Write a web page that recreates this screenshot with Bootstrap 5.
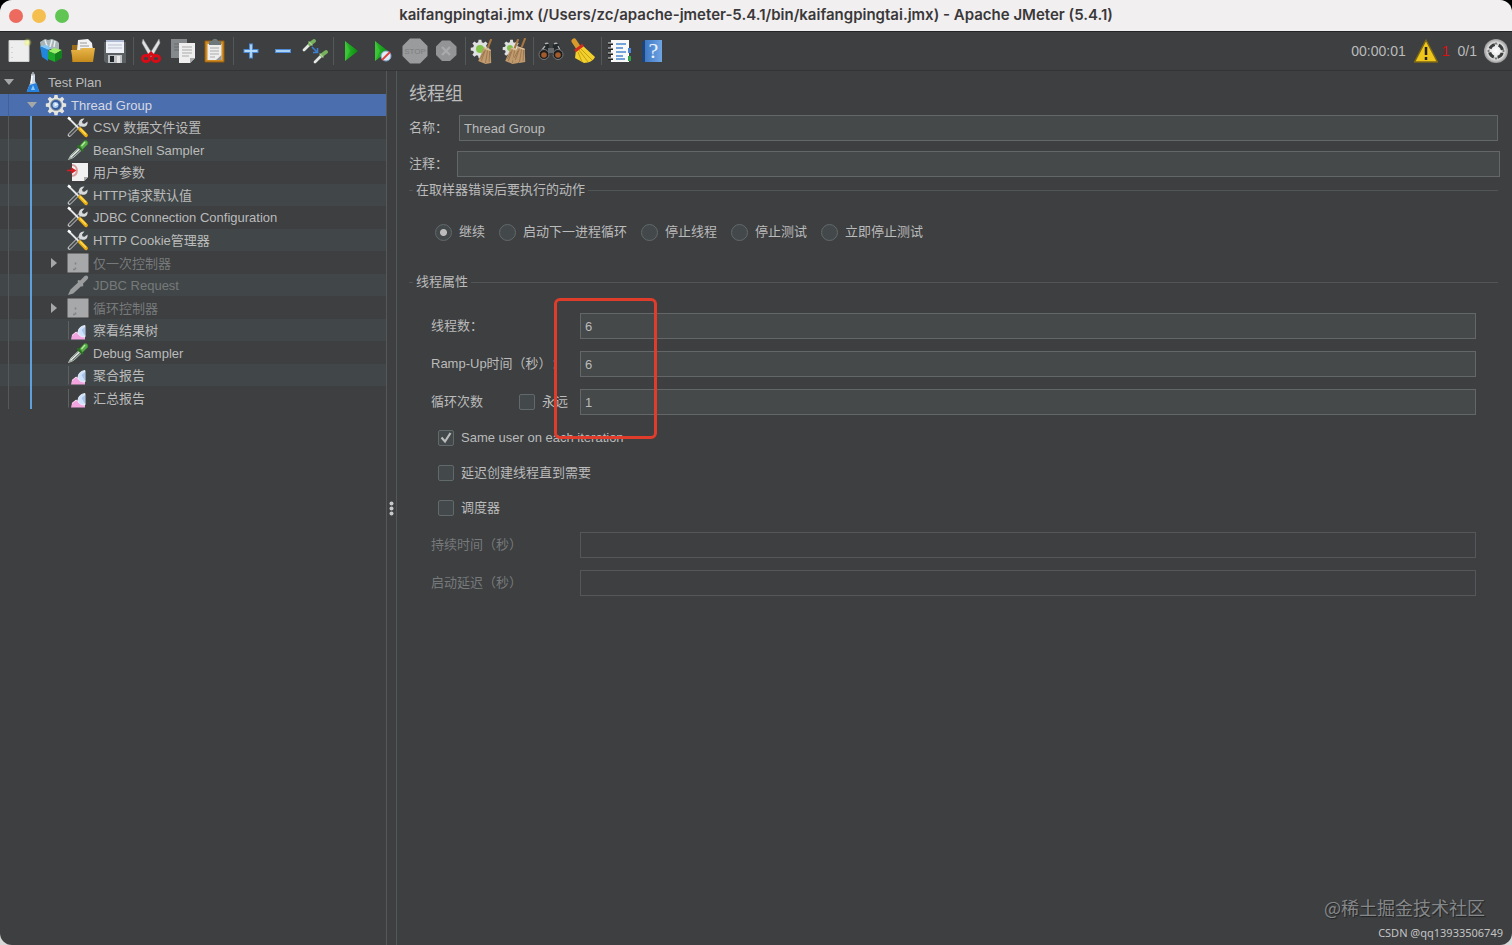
<!DOCTYPE html>
<html lang="zh-CN">
<head>
<meta charset="utf-8">
<meta name="viewport" content="width=device-width, initial-scale=1">
<title>Apache JMeter (5.4.1)</title>
<link href="https://cdn.jsdelivr.net/npm/bootstrap@5.3.0/dist/css/bootstrap.min.css" rel="stylesheet">
<style>
  :root { --pane:#3d3f41; --line:#555859; --edge:#646768; --field:#45494a; --ink:#bbb; --dim:#777a7b; }
  body { font-family:"Liberation Sans","Noto Sans CJK SC",sans-serif; font-size:13px; line-height:20px; color:var(--ink);
         background:linear-gradient(#000 50%,#d8d8d8 50%); text-spacing-trim:space-all; }
  .app-window { background:var(--pane); border-radius:12px; overflow:hidden; }
  .title-bar { height:32px; background:#f1eff0; border-bottom:1px solid #232425; color:#3a3839; }
  .title-bar h1 { font:600 15px/30px Inter,sans-serif; }
  .lights { left:9px; top:9px; gap:9px; }
  .light { width:14px; height:14px; border-radius:50%; border:0; padding:0; }
  .light-close { background:#ed6a5f; } .light-min { background:#f5bf4f; } .light-max { background:#61c554; }
  .tool-bar { height:39px; padding:0 3px; border-bottom:1px solid #323435; }
  .tool { width:32px; height:32px; padding:0; border:0; background:none; display:flex; align-items:center; justify-content:center; }
  .tool svg { width:26px; height:26px; }
  .tool-sep { width:4px; height:28px; background:linear-gradient(90deg,transparent 2px,#55585a 2px,#55585a 3px,transparent 3px); }
  .status { font-size:14px; }
  .errors { color:#e01010; }
  .tree-pane { width:386px; }
  .tree { display:grid; grid-auto-rows:1fr; height:338px; }
  .tree li { display:flex; align-items:center; white-space:nowrap; }
  .tree li:nth-child(even) { background:#414748; }
  .tree li.picked { background:#4b6eaf; color:#d5d9e2; }
  .tree li.off { color:var(--dim); }
  .tree li > span:last-child { padding-top:2px; }
  .guide-a { width:23px; align-self:stretch; background:linear-gradient(90deg,transparent 8px,#55595a 8px,#55595a 9px,transparent 9px); }
  .guide-b { width:22px; align-self:stretch; background:linear-gradient(90deg,transparent 7px,#5f9fdc 7px,#5f9fdc 9px,transparent 9px); }
  .picked .guide-a { background:linear-gradient(90deg,transparent 8px,#435f96 8px,#435f96 9px,transparent 9px); }
  .twist { width:18px; margin-right:4px; display:flex; justify-content:center; }
  .twist svg { width:10px; height:10px; fill:#a5a7a8; }
  .node-icon { width:22px; height:22px; margin-right:4px; }
  .splitter { width:11px; border:solid var(--line); border-width:0 1px; }
  .splitter svg { width:5px; height:15px; fill:#c8c8c8; }
  .editor { padding:11px 14px 11px 12px; }
  .editor h2 { font-size:18px; line-height:24px; font-weight:400; margin:0 0 9px; }
  .box { height:26px; border:1px solid var(--edge); border-radius:0; background:var(--field); color:var(--ink); padding:0 4px; width:100%; min-width:0; font-size:13px; line-height:20px; }
  .box:disabled { background:var(--pane); border-color:#55585a; }
  .name-label { width:50px; flex:none; }
  .comment-row { margin:10px -2px 3px 0; }
  .comment-row .name-label { width:48px; }
  .group-title { font-size:13px; line-height:20px; font-weight:400; gap:3px; margin:0; }
  .group-title::before { content:""; width:4px; border-top:1px solid #515556; }
  .group-title::after { content:""; flex:1; border-top:1px solid #515556; }
  .radio-row { padding:22px 26px 0; gap:14px; margin-bottom:30px; }
  .form-check-input.pick { width:17px; height:17px; margin:0; float:none; flex:none; background-color:#43494a; border:1px solid #62696a; box-shadow:none; }
  .form-check-input.pick[type=checkbox] { width:16px; height:16px; border-radius:2px; }
  .pick:checked[type=radio] { background-image:radial-gradient(circle,#bcbcbc 3px,transparent 4px); }
  .pick:checked[type=checkbox] { background-size:16px 16px; background-image:url("data:image/svg+xml,%3Csvg xmlns='http://www.w3.org/2000/svg' viewBox='0 0 16 16'%3E%3Cpath d='M3.5 7.5 7 11.5 12.5 3' fill='none' stroke='%23bbb' stroke-width='2.2'/%3E%3C/svg%3E"); }
  .choice { display:flex; align-items:center; gap:7px; }
  .props { padding:21px 22px 0; }
  .fields { display:grid; grid-template-columns:149px 1fr; row-gap:12px; align-items:center; }
  .checks { padding:13px 7px 14px; display:grid; row-gap:15px; }
  .off-label { color:var(--dim); }
  .highlight { left:123px; top:-15px; width:103px; height:141px; border:3px solid #e03c2b; border-radius:6px; pointer-events:none; }
  .credit { right:9px; bottom:3px; }
  .credit-main { font:18px/26px "Noto Sans CJK SC",sans-serif; color:#85888a; text-shadow:1px 1px 1px #222; margin:0 18px 4px 0; }
  .credit-sub { font:11px/18px "Noto Sans",sans-serif; color:#c4c4c4; margin:0; }
</style>
<script src="https://cdn.jsdelivr.net/npm/bootstrap@5.3.0/dist/js/bootstrap.bundle.min.js"></script>
</head>
<body>
<svg class="position-absolute" width="0" height="0" aria-hidden="true">
  <defs>
    <linearGradient id="g-green" x1="0" x2="1"><stop stop-color="#2fbf2c"/><stop offset="1" stop-color="#0b8a12"/></linearGradient>
    <linearGradient id="g-gold" x1="0" x2="0" y1="0" y2="1"><stop stop-color="#e9b64a"/><stop offset="1" stop-color="#c58a1c"/></linearGradient>
    <linearGradient id="g-book" x1="0" x2="1"><stop stop-color="#3f78c4"/><stop offset="1" stop-color="#6fa5e4"/></linearGradient>
    <radialGradient id="g-ball"><stop stop-color="#fff"/><stop offset=".7" stop-color="#ddd"/><stop offset="1" stop-color="#999"/></radialGradient>
    <radialGradient id="g-glow"><stop stop-color="#fbfcb0"/><stop offset="1" stop-color="#dfe84a" stop-opacity="0"/></radialGradient>
  </defs>
  <symbol id="gearshape" viewBox="0 0 24 24">
    <path d="M10.300 1h3.400l.5 3 2 .8 2.500-1.800 2.400 2.400-1.800 2.500.8 2 3 .5v3.400l-3 .5-.8 2 1.800 2.500-2.400 2.400-2.500-1.800-2 .8-.5 3h-3.400l-.5-3-2-.8-2.500 1.800-2.400-2.400 1.800-2.500-.8-2-3-.5v-3.400l3-.5.8-2-1.800-2.500 2.400-2.400 2.500 1.800 2-.8z"/>
  </symbol>
  <symbol id="broomtan" viewBox="0 0 14 24">
    <path d="M12.500 0 9 9" stroke="#a8763f" stroke-width="2"/>
    <path d="M5.500 8 12 10.500 12.500 23 7 24 0 21z" fill="#c09a6c"/>
    <path d="m7 10-4 11M9 11 7 23m4-12-.5 11M5.700 12 2 19" stroke="#8e6c48" stroke-width=".7" fill="none"/>
    <path d="m6 9 6 2" stroke="#dfc39a" stroke-width="1.200"/>
  </symbol>
  <symbol id="wrench" viewBox="0 0 22 22">
    <path d="m2.500 19 10-10" stroke="#c4c6c7" stroke-width="3.600" stroke-linecap="round"/>
    <path d="m2.800 18.700 10-10" stroke="#4a4d4e" stroke-width="2" stroke-linecap="round"/>
    <path d="M12 9.500c-1-4 1.500-7.500 5.500-7l-2.500 3 .6 2 2 .3 2.900-2.300c.7 4-2.500 6.200-6 5z" fill="#d7dadb"/>
    <path d="m1.500 2 10 10" stroke="#e4e6e7" stroke-width="1.800"/><path d="m1 1.500 2.500 2" stroke="#fff" stroke-width="2.500"/>
    <path d="m13 13 6 6.300" stroke="#e8ac12" stroke-width="3.800" stroke-linecap="round"/><path d="m13 12.500 6 6" stroke="#ffe05a" stroke-width="1.200"/>
  </symbol>
  <symbol id="dropper" viewBox="0 0 22 22">
    <path d="M1.500 20.500 4 16 12 8.500l2.500 2.500-8 7.500z" fill="#68736d" stroke="#b4bfb9"/>
    <path d="m3.500 18.500 9-8.500" stroke="#eef5f0" stroke-width="1.200"/>
    <path d="m11 7 4.500 4.500" stroke="#286f22" stroke-width="2.200" stroke-linecap="round"/>
    <path d="m12.500 7 4.500-5c2-1.500 5 .5 3.500 3.500l-5 5z" fill="#58ad48" stroke="#347d2c" stroke-width=".6"/>
    <path d="m14.500 7 3.500-4" stroke="#b5ec9f" stroke-width="1.400"/>
  </symbol>
  <symbol id="dropperoff" viewBox="0 0 22 22">
    <path d="M1 21 3.500 15.500 11 8.500l-.5-1.500 1-1 1.700.5 4.500-4.500c2-1.500 4.500.5 3 3l-4.700 4.700.4 1.800-1 1-1.600-.1-7.500 7z" fill="#9a9c9d"/>
  </symbol>
  <symbol id="chart" viewBox="0 0 22 22">
    <path d="M1.500 2v18.500" stroke="#5e6061" fill="none"/>
    <path d="M4 20.500 5 16l4-3 4 2 5 2v3.500z" fill="#f3a5df"/>
    <path d="M5 16.500 9 13l3 2 2-4 4 6" fill="none" stroke="#f9d9f2"/>
    <path d="M11 13c.5-4 3-6 7-6.500v11.500C15 18 11 17 11 13z" fill="#cfe2fb" stroke="#f2f7ff" stroke-width=".8"/><path d="M14.500 11 18 8v9z" fill="#a8c5ee"/>
  </symbol>
  <symbol id="ctrl" viewBox="0 0 22 22">
    <path d="M.5 1.500h21v19H.5z" fill="#a6a8a9"/>
    <path d="M8.500 10.500v2m0 3v2M6 17.500h2" stroke="#808283" stroke-width="1.500"/>
  </symbol>
</svg>

<div class="app-window d-flex flex-column min-vh-100 position-relative">
  <header class="title-bar position-relative text-center">
    <div class="lights position-absolute d-flex">
      <button class="light light-close" aria-label="关闭"></button>
      <button class="light light-min" aria-label="最小化"></button>
      <button class="light light-max" aria-label="缩放"></button>
    </div>
    <h1 class="m-0 text-truncate">kaifangpingtai.jmx (/Users/zc/apache-jmeter-5.4.1/bin/kaifangpingtai.jmx) - Apache JMeter (5.4.1)</h1>
  </header>

  <nav class="tool-bar d-flex align-items-center" aria-label="工具栏">
    <button class="tool" aria-label="新建"><svg viewBox="0 0 26 26"><path d="M3 2.500h20v21H3z" fill="#eee"/><path d="M3 2.500h20v21H3z" fill="none" stroke="#d0d0d0"/><path d="M6 9v1m0 4v1m0 4v1" stroke="#bbb"/><circle cx="21.500" cy="4.500" r="4.500" fill="url(#g-glow)"/></svg></button>
    <button class="tool" aria-label="模板"><svg viewBox="0 0 26 26"><path d="m2 4 5-3 3 1 4-1 5 2 2 2v6H3z" fill="#a9b4b8"/><path d="m7 2 2 6m5-6-2 7m5-6-1 6" stroke="#e6eef0" stroke-width="1.500"/><path d="m2 8 8 3v12L4 19z" fill="#2286da"/><path d="m2 8 6-1 5 3-2 2z" fill="#83c7f6"/><path d="m10 13 6-3 8 2-7 4z" fill="#9bf06a"/><path d="m10 13 7 3v8l-7-3z" fill="#1ca92b"/><path d="m17 16 7-4v8l-7 4z" fill="#12801c"/></svg></button>
    <button class="tool" aria-label="打开"><svg viewBox="0 0 26 26"><path d="M2 7h7l2 2h12v15H2z" fill="#9b6d18"/><path d="m8 2 10-1 4 4 1 8H7z" fill="#f2f2f2"/><path d="M10 5h7m-7 3h9m-9 3h9" stroke="#999"/><path d="M1 12h9l2-2h13l-2 14H3z" fill="url(#g-gold)"/></svg></button>
    <button class="tool" aria-label="保存"><svg viewBox="0 0 26 26"><path d="M2 4h22v21H4l-2-2z" fill="#5c6063"/><path d="M4 2h18v13H4z" fill="#eef1f7"/><path d="M4 2h18v2H4z" fill="#aebbd2"/><path d="M6 7h14M6 10h14" stroke="#b9c1cd"/><path d="M6 17h14v8H6z" fill="#bfc2c4"/><path d="M8 18h4v6H8z" fill="#25282a"/><path d="M15 18h3v7h-3z" fill="#e7e7e7"/></svg></button>
    <span class="tool-sep"></span>
    <button class="tool" aria-label="剪切"><svg viewBox="0 0 26 26"><path d="m5 1 10 16-3 2L4 5zM21 1 11 17l3 2L22 5z" fill="#dfe2e3" stroke="#999" stroke-width=".5"/><g fill="none" stroke="#d80b16" stroke-width="2.800"><ellipse cx="8" cy="20.500" rx="3.700" ry="3"/><ellipse cx="18" cy="20.500" rx="3.700" ry="3"/><path d="m10 18 3-3 3 3"/></g></svg></button>
    <button class="tool" aria-label="复制"><svg viewBox="0 0 26 26"><path d="M1 1h16v19H1z" fill="#85898b"/><path d="M4 6h10M4 9h8M4 12h6" stroke="#666a6c"/><path d="M9 5h16v15l-5 5H9z" fill="#eee"/><path d="M12 9h10m-10 3h10m-10 3h10m-10 3h7" stroke="#aaa"/><path d="M20 25v-5h5z" fill="#aaa"/></svg></button>
    <button class="tool" aria-label="粘贴"><svg viewBox="0 0 26 26"><path d="M3 3h19v21H3z" fill="#d18c22" stroke="#945c0d"/><path d="M5.500 6h14v16h-14z" fill="#eee"/><path d="M8 10h9m-9 3h9m-9 3h9m-9 3h5" stroke="#aaa"/><path d="M7 3h3c1-3 5-3 6 0h3v4H7z" fill="#6e7779"/><path d="m14 22 5.500-5v5z" fill="#999"/></svg></button>
    <span class="tool-sep"></span>
    <button class="tool" aria-label="展开"><svg viewBox="0 0 26 26"><path d="M13 5.500v15M5.500 13h15" stroke="#4e8bd7" stroke-width="4"/><path d="M13 6.500v13M6.500 13h13" stroke="#b5dafa" stroke-width="1.800"/></svg></button>
    <button class="tool" aria-label="折叠"><svg viewBox="0 0 26 26"><path d="M5 13h16" stroke="#4e8bd7" stroke-width="4"/><path d="M6 13h14" stroke="#b5dafa" stroke-width="1.800"/></svg></button>
    <button class="tool" aria-label="切换"><svg viewBox="0 0 26 26"><g stroke-linecap="round"><path d="m2 12 6-6m5 18 6-6" stroke="#e4e8e5" stroke-width="2.800"/><path d="m8 6 4-3m8 14 4-3" stroke="#79b25e" stroke-width="3.800"/><path d="m7 4 3 3m8 9 3 3" stroke="#acd194" stroke-width="1.300"/></g><path d="m10 9 5 5m.5-4v4.500H11" fill="none" stroke="#3c7fd0" stroke-width="1.600"/></svg></button>
    <span class="tool-sep"></span>
    <button class="tool" aria-label="启动"><svg viewBox="0 0 26 26"><path d="m7 3 13 10L7 23z" fill="url(#g-green)"/><path d="m7 3 5 10-5 10z" fill="#45cf41" opacity=".6"/></svg></button>
    <button class="tool" aria-label="无停顿启动"><svg viewBox="0 0 26 26"><path d="m5 3 13 10L5 23z" fill="url(#g-green)"/><path d="m5 3 5 10-5 10z" fill="#45cf41" opacity=".6"/><circle cx="16" cy="18" r="5" fill="#dcebf9" stroke="#82a5cc"/><path d="m12 22 8-8" stroke="#df4039" stroke-width="1.800"/></svg></button>
    <button class="tool" aria-label="停止"><svg viewBox="0 0 26 26"><path d="M8 .5h10L25.500 8v10L18 25.500H8L.5 18V8z" fill="#999b9c"/><text x="13" y="16" text-anchor="middle" font-family="Liberation Sans,sans-serif" font-size="8" fill="#7c7e7f">STOP</text></svg></button>
    <button class="tool" aria-label="关闭线程"><svg viewBox="0 0 26 26"><path d="M8 2.500h8l6.500 6V17l-6.500 6H8l-6-6V8.500z" fill="#929495"/><path d="m8 9 8 8m0-8-8 8" stroke="#a8aaab" stroke-width="2.400"/></svg></button>
    <span class="tool-sep"></span>
    <button class="tool" aria-label="清除"><svg viewBox="0 0 26 26"><use href="#gearshape" x="0" y="1" width="20" height="20" fill="#dfe1e0"/><circle cx="10" cy="11" r="4" fill="#82c44b"/><use href="#broomtan" x="8" y="1" width="15" height="25"/></svg></button>
    <button class="tool" aria-label="清除全部"><svg viewBox="0 0 26 26"><use href="#gearshape" x="0" y="1" width="19" height="19" fill="#dfe1e0"/><circle cx="8" cy="10" r="3" fill="#82c44b"/><use href="#broomtan" x="3" y="1" width="15" height="25"/><use href="#broomtan" x="10" y="0" width="15" height="25"/></svg></button>
    <span class="tool-sep"></span>
    <button class="tool" aria-label="搜索"><svg viewBox="0 0 26 26"><path d="M6 7c1-3 5-2 5 0l1 10H2zm9 0c0-3 5-3 6 0l4 10H14z" fill="#25282a"/><path d="M7 6c1-1 3-1 3 0m6 0c1-1 3-1 3 0M4 12l3-4m15 4-2-4" fill="none" stroke="#aeb2b3" stroke-width="1.300"/><path d="M10 10h6v5h-6z" fill="#666a6c"/><circle cx="6" cy="16.500" r="5" fill="#1c1d1e" stroke="#77797a"/><circle cx="20" cy="16.500" r="5" fill="#1c1d1e" stroke="#77797a"/><circle cx="6" cy="17" r="2.800" fill="#a45b2b"/><circle cx="20" cy="17" r="2.800" fill="#a45b2b"/></svg></button>
    <button class="tool" aria-label="重置搜索"><svg viewBox="0 0 26 26"><path d="m4 3 4 6" stroke="#d99a2c" stroke-width="5" stroke-linecap="round"/><path d="m6 12 6-5 13 12c-1 3-6 6-11 6L5 20z" fill="#f3d12c"/><path d="m8 14 4 10M9 12l9 12M11 11l11 11" stroke="#c19710" stroke-width=".9"/><path d="m5 13 8-6" stroke="#cf2d20" stroke-width="3"/></svg></button>
    <span class="tool-sep"></span>
    <button class="tool" aria-label="函数助手"><svg viewBox="0 0 26 26"><path d="M5 2h18v22H5z" fill="#f8f8f8"/><path d="M10 6h10M10 10h7M10 14h10M10 18h7M10 21h9" stroke="#4985ce" stroke-width="1.600"/><path d="M2 6h5M2 11h5M2 16h5M2 21h5" stroke="#222" stroke-width="2.200"/><path d="M2 5h5M2 10h5M2 15h5M2 20h5" stroke="#ddd"/><path d="M22 10h3v5h-3z" fill="#4d84d6"/><path d="M22 18h3v5h-3z" fill="#34a047"/></svg></button>
    <button class="tool" aria-label="帮助"><svg viewBox="0 0 26 26"><path d="m4 4 3-2v22H4z" fill="#1e4477"/><path d="M7 2h17v22H7z" fill="url(#g-book)"/><text x="15.500" y="20" text-anchor="middle" font-family="Liberation Serif,serif" font-size="22" fill="#e9f3ff">?</text></svg></button>
    <div class="status d-flex align-items-center ms-auto">
      <span>00:00:01</span>
      <button class="tool ms-1" aria-label="日志"><svg viewBox="0 0 26 26"><path d="M13 2 24.500 24h-23z" fill="#efc61b" stroke="#7d6714" stroke-width="1.500" stroke-linejoin="round"/><path d="M13 9v8m0 2v3" stroke="#272211" stroke-width="2.500"/></svg></button>
      <span class="errors">1</span><span class="ms-2">0/1</span>
      <svg class="ms-1" width="28" height="28" viewBox="0 0 28 28"><circle cx="15" cy="14" r="12" fill="url(#g-ball)"/><circle cx="15" cy="14" r="6.500" fill="none" stroke="#3b3e3f" stroke-width="3" stroke-dasharray="6.200 4" stroke-dashoffset="-2"/><path d="m15 5 2 2.500h-4zM15 23l2-2.500h-4zM6 14l2.500-2v4zM24 14l-2.500-2v4z" fill="#777"/></svg>
    </div>
  </nav>

  <main class="d-flex flex-grow-1">
    <aside class="tree-pane flex-shrink-0">
      <ul class="tree list-unstyled m-0">
        <li><span class="twist"><svg viewBox="0 0 10 10"><path d="M0 2h10L5 8z"/></svg></span><svg class="node-icon" viewBox="0 0 22 22"><path d="M9 4h4v6l4 10H5L9 10z" fill="#cdd9e6"/><path d="m7.500 14 7-2L17.500 21h-13z" fill="#2481df"/><path d="m10 5-1 7" stroke="#fff" stroke-width="1.500"/><path d="M9 3.500h4M11 1v2" stroke="#aeb8bd" stroke-width="1.500"/><path d="m11 14-2 5h4z" fill="#8dc8fa"/></svg><span>Test Plan</span></li>
        <li class="picked"><span class="guide-a"></span><span class="twist"><svg viewBox="0 0 10 10"><path d="M0 2h10L5 8z"/></svg></span><svg class="node-icon" viewBox="0 0 22 22"><use href="#gearshape" x="0" y="0" width="22" height="22" fill="#e5e5df"/><circle cx="11" cy="11" r="5.500" fill="#345d9f" stroke="#9aa0a5"/><circle cx="10.500" cy="11" r="3" fill="#a9c8ee"/><path d="M9.500 8.500v4l4-2z" fill="#eef5ff"/></svg><span>Thread Group</span></li>
        <li><span class="guide-a"></span><span class="guide-b"></span><span class="twist"></span><svg class="node-icon"><use href="#wrench"/></svg><span>CSV 数据文件设置</span></li>
        <li><span class="guide-a"></span><span class="guide-b"></span><span class="twist"></span><svg class="node-icon"><use href="#dropper"/></svg><span>BeanShell Sampler</span></li>
        <li><span class="guide-a"></span><span class="guide-b"></span><span class="twist"></span><svg class="node-icon" viewBox="0 0 22 22"><path d="M5 2h16v14l-4 4H5z" fill="#f1f1f1"/><path d="M17 20v-4h4z" fill="#aaa"/><path d="M5 4c6 0 7 10 0 11" fill="none" stroke="#d99c9c" stroke-width="2"/><path d="M0 9.500h6M5 7.500l3 2-3 2z" fill="#d81c24" stroke="#d81c24" stroke-width="1.500"/></svg><span>用户参数</span></li>
        <li><span class="guide-a"></span><span class="guide-b"></span><span class="twist"></span><svg class="node-icon"><use href="#wrench"/></svg><span>HTTP请求默认值</span></li>
        <li><span class="guide-a"></span><span class="guide-b"></span><span class="twist"></span><svg class="node-icon"><use href="#wrench"/></svg><span>JDBC Connection Configuration</span></li>
        <li><span class="guide-a"></span><span class="guide-b"></span><span class="twist"></span><svg class="node-icon"><use href="#wrench"/></svg><span>HTTP Cookie管理器</span></li>
        <li class="off"><span class="guide-a"></span><span class="guide-b"></span><span class="twist"><svg viewBox="0 0 10 10"><path d="M2 0v10l6-5z"/></svg></span><svg class="node-icon"><use href="#ctrl"/></svg><span>仅一次控制器</span></li>
        <li class="off"><span class="guide-a"></span><span class="guide-b"></span><span class="twist"></span><svg class="node-icon"><use href="#dropperoff"/></svg><span>JDBC Request</span></li>
        <li class="off"><span class="guide-a"></span><span class="guide-b"></span><span class="twist"><svg viewBox="0 0 10 10"><path d="M2 0v10l6-5z"/></svg></span><svg class="node-icon"><use href="#ctrl"/></svg><span>循环控制器</span></li>
        <li><span class="guide-a"></span><span class="guide-b"></span><span class="twist"></span><svg class="node-icon"><use href="#chart"/></svg><span>察看结果树</span></li>
        <li><span class="guide-a"></span><span class="guide-b"></span><span class="twist"></span><svg class="node-icon"><use href="#dropper"/></svg><span>Debug Sampler</span></li>
        <li><span class="guide-a"></span><span class="guide-b"></span><span class="twist"></span><svg class="node-icon"><use href="#chart"/></svg><span>聚合报告</span></li>
        <li><span class="guide-a"></span><span class="guide-b"></span><span class="twist"></span><svg class="node-icon"><use href="#chart"/></svg><span>汇总报告</span></li>
      </ul>
    </aside>
    <div class="splitter flex-shrink-0 d-flex align-items-center justify-content-center"><svg viewBox="0 0 5 15"><circle cx="2.500" cy="2.500" r="2"/><circle cx="2.500" cy="7.500" r="2"/><circle cx="2.500" cy="12.500" r="2"/></svg></div>

    <form class="editor flex-grow-1" onsubmit="return false">
      <h2>线程组</h2>
      <div class="d-flex align-items-center"><label class="name-label" for="f-name">名称：</label><input class="box" id="f-name" value="Thread Group"></div>
      <div class="comment-row d-flex align-items-center"><label class="name-label" for="f-note">注释：</label><input class="box" id="f-note"></div>
      <div role="radiogroup" aria-labelledby="t-action">
        <h3 class="group-title d-flex align-items-center" id="t-action">在取样器错误后要执行的动作</h3>
        <div class="radio-row d-flex flex-wrap">
          <label class="choice"><input class="form-check-input pick" type="radio" name="act" checked>继续</label>
          <label class="choice"><input class="form-check-input pick" type="radio" name="act">启动下一进程循环</label>
          <label class="choice"><input class="form-check-input pick" type="radio" name="act">停止线程</label>
          <label class="choice"><input class="form-check-input pick" type="radio" name="act">停止测试</label>
          <label class="choice"><input class="form-check-input pick" type="radio" name="act">立即停止测试</label>
        </div>
      </div>
      <section>
        <h3 class="group-title d-flex align-items-center">线程属性</h3>
        <div class="props">
          <div class="fields position-relative">
            <label for="f-threads">线程数：</label><input class="box" id="f-threads" value="6">
            <label for="f-ramp">Ramp-Up时间（秒）：</label><input class="box" id="f-ramp" value="6">
            <div class="d-flex align-items-center justify-content-between pe-2"><label for="f-loops">循环次数</label><label class="choice me-1"><input class="form-check-input pick" type="checkbox">永远</label></div><input class="box" id="f-loops" value="1">
            <div class="highlight position-absolute"></div>
          </div>
          <div class="checks">
            <label class="choice"><input class="form-check-input pick" type="checkbox" checked>Same user on each iteration</label>
            <label class="choice"><input class="form-check-input pick" type="checkbox">延迟创建线程直到需要</label>
            <label class="choice"><input class="form-check-input pick" type="checkbox">调度器</label>
          </div>
          <div class="fields">
            <label class="off-label" for="f-dur">持续时间（秒）</label><input class="box" id="f-dur" disabled>
            <label class="off-label" for="f-delay">启动延迟（秒）</label><input class="box" id="f-delay" disabled>
          </div>
        </div>
      </section>
    </form>
  </main>
  <div class="credit position-absolute text-end"><p class="credit-main">@稀土掘金技术社区</p><p class="credit-sub">CSDN @qq13933506749</p></div>
</div>
</body>
</html>
